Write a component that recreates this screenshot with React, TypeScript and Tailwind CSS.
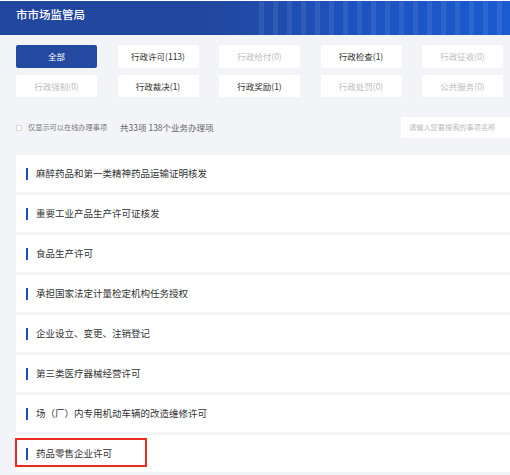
import clsx from "clsx";

const TABS = [
  { label: "全部", active: true },
  { label: "行政许可(113)", enabled: true },
  { label: "行政给付(0)" },
  { label: "行政检查(1)", enabled: true },
  { label: "行政征收(0)" },
  { label: "行政强制(0)" },
  { label: "行政裁决(1)", enabled: true },
  { label: "行政奖励(1)", enabled: true },
  { label: "行政处罚(0)" },
  { label: "公共服务(0)" },
];

const ITEMS = [
  "麻醉药品和第一类精神药品运输证明核发",
  "重要工业产品生产许可证核发",
  "食品生产许可",
  "承担国家法定计量检定机构任务授权",
  "企业设立、变更、注销登记",
  "第三类医疗器械经营许可",
  "场（厂）内专用机动车辆的改造维修许可",
  "药品零售企业许可",
];

export default function App() {
  return (
    <div
      className="w-[510px] h-[475px] overflow-hidden bg-[#f3f4f8]"
      style={{ fontFamily: '"Noto Sans CJK SC", "Noto Sans", sans-serif' }}
    >
      {/* Header */}
      <div className="pt-px bg-white">
        <div className="h-[34px] flex items-center px-4 bg-[linear-gradient(90deg,#22479e_0%,#22479e_40%,#1d53bf_70%,#1a5bd0_100%)] relative overflow-hidden">
          <div className="absolute inset-y-0 right-0 w-[260px] bg-[repeating-linear-gradient(90deg,rgba(255,255,255,0)_0px,rgba(255,255,255,0)_9px,rgba(255,255,255,0.08)_9px,rgba(255,255,255,0.08)_14px)]" />
          <span className="relative text-white text-[11.5px] font-medium leading-none -mt-1.5">市市场监管局</span>
        </div>
      </div>

      {/* Tabs */}
      <div className="grid grid-cols-[repeat(5,81px)] gap-x-[20.5px] gap-y-[7px] pl-4 pt-[10px]">
        {TABS.map((t) => (
          <div
            key={t.label}
            className={clsx(
              "h-[22.5px] flex items-center justify-center text-[8.5px] leading-none rounded-[2px]",
              t.active ? "bg-[#2449a0] text-white" : "bg-white",
              !t.active && (t.enabled ? "text-[#333]" : "text-[#bdbdbd]")
            )}
          >
            {t.label}
          </div>
        ))}
      </div>

      {/* Filter row */}
      <div className="flex items-center pl-4 mt-[20px] h-[21px]">
        <div className="w-[6px] h-[6px] border border-[#d9d9d9] bg-white" />
        <span className="ml-[6px] text-[7.2px] text-[#777] leading-none">仅显示可以在线办理事项</span>
        <span className="ml-[13px] text-[8.5px] text-[#666] leading-none">共33项 138个业务办理项</span>
        <div className="ml-auto w-[109px] h-[21px] bg-white flex items-center pl-2">
          <span className="text-[7.2px] text-[#bbb] leading-none">请输入您要搜索的事项名称</span>
        </div>
      </div>

      {/* List */}
      <div className="mt-[17px] flex flex-col gap-[3px] pl-4">
        {ITEMS.map((item, i) => (
          <div key={item} className="h-[37px] bg-white flex items-center relative">
            <div className="ml-[10px] w-[2px] h-[12px] bg-[#1a4fc4]" />
            <span className="ml-[8px] text-[9.5px] text-[#333] leading-none">{item}</span>
            {i === ITEMS.length - 1 && (
              <div className="absolute left-[-1px] top-[3px] w-[132px] h-[29px] border-2 border-[#ec2a1e]" />
            )}
          </div>
        ))}
      </div>
    </div>
  );
}
